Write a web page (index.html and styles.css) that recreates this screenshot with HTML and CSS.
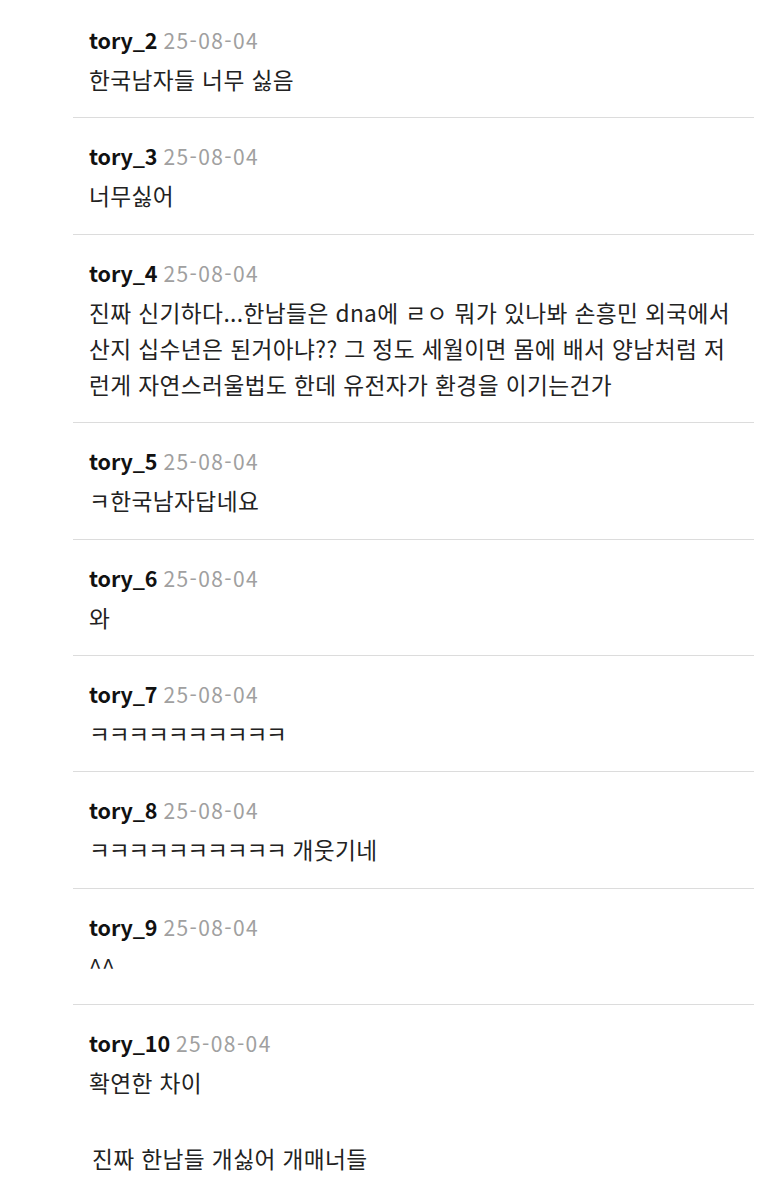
FILE: index.html
```html
<!DOCTYPE html>
<html lang="ko">
<head>
<meta charset="utf-8">
<link rel="stylesheet" href="styles.css">
</head>
<body>
<div class="list">
  <div class="item first">
    <div class="meta"><span class="user">tory_2</span><span class="date">25-08-04</span></div>
    <div class="text">한국남자들 너무 싫음</div>
  </div>
  <div class="item">
    <div class="meta"><span class="user">tory_3</span><span class="date">25-08-04</span></div>
    <div class="text">너무싫어</div>
  </div>
  <div class="item">
    <div class="meta"><span class="user">tory_4</span><span class="date">25-08-04</span></div>
    <div class="text">진짜 신기하다...한남들은 dna에 ㄹㅇ 뭐가 있나봐 손흥민 외국에서 산지 십수년은 된거아냐?? 그 정도 세월이면 몸에 배서 양남처럼 저런게 자연스러울법도 한데 유전자가 환경을 이기는건가</div>
  </div>
  <div class="item">
    <div class="meta"><span class="user">tory_5</span><span class="date">25-08-04</span></div>
    <div class="text">ㅋ한국남자답네요</div>
  </div>
  <div class="item">
    <div class="meta"><span class="user">tory_6</span><span class="date">25-08-04</span></div>
    <div class="text">와</div>
  </div>
  <div class="item">
    <div class="meta"><span class="user">tory_7</span><span class="date">25-08-04</span></div>
    <div class="text"><span class="jamo">ㅋㅋㅋㅋㅋㅋㅋㅋㅋㅋ</span></div>
  </div>
  <div class="item">
    <div class="meta"><span class="user">tory_8</span><span class="date">25-08-04</span></div>
    <div class="text"><span class="jamo">ㅋㅋㅋㅋㅋㅋㅋㅋㅋㅋ</span> 개웃기네</div>
  </div>
  <div class="item">
    <div class="meta"><span class="user">tory_9</span><span class="date">25-08-04</span></div>
    <div class="text">^^</div>
  </div>
  <div class="item last">
    <div class="meta"><span class="user">tory_10</span><span class="date">25-08-04</span></div>
    <div class="text">확연한 차이</div>
    <div class="text extra">진짜 한남들 개싫어 개매너들</div>
  </div>
</div>
</body>
</html>
```

FILE: styles.css
```css
html, body {
  margin: 0;
  padding: 0;
  background: #ffffff;
}
body {
  font-family: "Noto Sans CJK KR", "Noto Sans", sans-serif;
  color: #222222;
}
.list {
  margin-left: 73px;
  width: 681px;
}
.item {
  padding: 24px 14px 19.4px 16px;
  border-bottom: 1px solid #dcdcdc;
}
.item.first {
  padding-top: 26px;
}
.item.last {
  border-bottom: none;
}
.meta {
  display: flex;
  align-items: baseline;
  gap: 6px;
  height: 28px;
  line-height: 28px;
}
.user {
  font-size: 21.5px;
  font-weight: 700;
  color: #111111;
  letter-spacing: -0.1px;
}
.date {
  font-size: 21px;
  color: #a0a0a0;
  letter-spacing: 1.4px;
}
.text {
  margin-top: 8px;
  font-size: 22.7px;
  line-height: 36px;
  color: #222222;
  letter-spacing: 0.4px;
}
.jamo {
  letter-spacing: -1.2px;
}
.text.extra {
  margin-top: 40px;
  padding-left: 3px;
}
```
